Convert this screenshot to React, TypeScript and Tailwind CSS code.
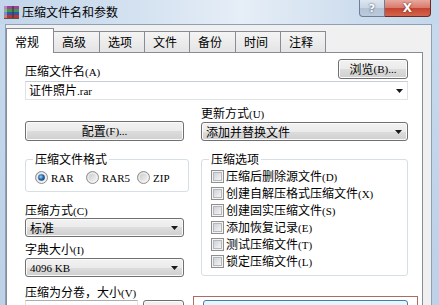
import React from "react";

function T({ s }: { s: string }) {
  const parts = s.split(/([\x00-\x7F]+)/).filter(Boolean);
  return (
    <>
      {parts.map((p, i) =>
        /^[\x00-\x7F]+$/.test(p) ? (
          <span key={i} className="font-['Liberation_Serif',serif] text-[11px]">
            {p}
          </span>
        ) : (
          <span key={i}>{p}</span>
        )
      )}
    </>
  );
}

function Arrow() {
  return (
    <svg width="7" height="4" viewBox="0 0 7 4" className="shrink-0">
      <path d="M0 0H7L3.5 4Z" fill="#1a1a1a" />
    </svg>
  );
}

function Radio({ checked }: { checked?: boolean }) {
  return (
    <svg width="13" height="13" viewBox="0 0 13 13" className="shrink-0">
      <defs>
        <linearGradient id="rgbg" x1="0" y1="0" x2="1" y2="1">
          <stop offset="0" stopColor="#c4c4c4" />
          <stop offset="1" stopColor="#fbfbfb" />
        </linearGradient>
        <radialGradient id="rgdot" cx="0.4" cy="0.4" r="0.6">
          <stop offset="0" stopColor="#9fdcfb" />
          <stop offset="0.55" stopColor="#2f72bd" />
          <stop offset="1" stopColor="#163f74" />
        </radialGradient>
      </defs>
      <circle cx="6.5" cy="6.5" r="6" fill="url(#rgbg)" stroke="#8e8f8f" />
      <circle cx="6.5" cy="6.5" r="4.5" fill="none" stroke="#f4f4f4" strokeWidth="1" />
      {checked && <circle cx="6.5" cy="6.5" r="3.3" fill="url(#rgdot)" />}
    </svg>
  );
}

function Check() {
  return (
    <svg width="13" height="13" viewBox="0 0 13 13" className="shrink-0">
      <defs>
        <linearGradient id="cbbg" x1="0" y1="0" x2="1" y2="1">
          <stop offset="0" stopColor="#cbcfd5" />
          <stop offset="1" stopColor="#f7f7f7" />
        </linearGradient>
      </defs>
      <rect x="0.5" y="0.5" width="12" height="12" fill="#f4f4f4" stroke="#8e8f8f" />
      <rect x="2.5" y="2.5" width="8" height="8" fill="url(#cbbg)" stroke="#b4b7bb" />
    </svg>
  );
}

const btn =
  "border border-[#707070] rounded-[3px] bg-[linear-gradient(#f2f2f2_0%,#ebebeb_50%,#dddddd_50%,#cfcfcf_100%)] shadow-[inset_0_0_0_1px_#fbfbfb]";

function Combo({ text, className = "" }: { text: string; className?: string }) {
  return (
    <div className={`${btn} h-[19px] flex items-center justify-between pl-[4px] pr-[5px] ${className}`}>
      <span>
        <T s={text} />
      </span>
      <Arrow />
    </div>
  );
}

function WinRarIcon() {
  return (
    <svg width="17" height="16" viewBox="0 0 17 16">
      <rect x="1" y="2" width="15" height="3" fill="#a33f9c" />
      <rect x="1" y="5" width="15" height="3" fill="#3f9a49" />
      <rect x="1" y="8" width="15" height="3" fill="#2f56b0" />
      <rect x="1" y="11" width="15" height="3" fill="#b8372e" />
      <rect x="1" y="2" width="3" height="12" fill="#ffffff" opacity="0.35" />
      <rect x="9" y="2" width="2" height="12" fill="#3a3a3a" opacity="0.6" />
      <rect x="1" y="14" width="15" height="1" fill="#555" />
    </svg>
  );
}

function TitleBar() {
  return (
    <div className="flex h-[24px] bg-[linear-gradient(90deg,#c2d5ea_0%,#d6e3f1_35%,#e6eef7_55%,#cfdeee_80%,#c4d7eb_100%)]">
      <div className="flex flex-1 items-center gap-[2px] pl-[3px]">
        <WinRarIcon />
        <span className="text-[12px] text-black">压缩文件名和参数</span>
      </div>
      <div className="flex items-start pr-[8px]">
        <div className="w-[26px] h-[17px] border border-[#6d7f98] border-t-0 rounded-bl-[4px] bg-[linear-gradient(#dde6f0_0%,#c9d5e3_50%,#b3c2d4_51%,#bccbdc_100%)] flex items-center justify-center">
          <span className="font-['DejaVu_Sans',sans-serif] font-bold text-[11px] leading-none text-white [text-shadow:0_0_2px_#203040]">
            ?
          </span>
        </div>
        <div className="w-[46px] h-[17px] border border-[#6a2b22] border-t-0 border-l-0 rounded-br-[4px] bg-[linear-gradient(#e7a99e_0%,#d9786a_50%,#c5432f_51%,#d2654d_100%)] flex items-center justify-center">
          <span className="font-['DejaVu_Sans',sans-serif] font-bold text-[12px] leading-none text-white [text-shadow:0_0_2px_#5a1a10]">
            X
          </span>
        </div>
      </div>
    </div>
  );
}

function Tabs() {
  const others: [string, number][] = [
    ["高级", 47],
    ["选项", 46],
    ["文件", 46],
    ["备份", 47],
    ["时间", 46],
    ["注释", 46],
  ];
  return (
    <div className="relative z-10 -mb-px flex h-[25px] items-end">
      <div className="relative z-10 w-[48px] h-[25px] bg-white border border-b-0 border-[#898c95] pl-[8px] pt-[6px]">
        常规
      </div>
      {others.map(([t, w]) => (
        <div
          key={t}
          style={{ width: w }}
          className="-ml-px mb-px h-[21px] border border-b-0 border-[#898c95] bg-[linear-gradient(#f4f4f4,#e4e4e4)] flex items-center pl-[8px]"
        >
          {t}
        </div>
      ))}
    </div>
  );
}

function Panel() {
  const checks = [
    "压缩后删除源文件(D)",
    "创建自解压格式压缩文件(X)",
    "创建固实压缩文件(S)",
    "添加恢复记录(E)",
    "测试压缩文件(T)",
    "锁定压缩文件(L)",
  ];
  return (
    <div className="w-[417px] flex-1 bg-white border border-[#898c95] pl-[18px] pr-[14px] pt-[6px]">
      <div className="flex h-[20px] items-end justify-between">
        <span>
          <T s="压缩文件名(A)" />
        </span>
        <div className={`${btn} w-[70px] h-[20px] flex items-center justify-center`}>
          <T s="浏览(B)..." />
        </div>
      </div>
      <div className="mt-[2px] h-[19px] border border-[#dfe3e8] border-t-[#c9ced6] bg-white flex items-center justify-between pl-[3px] pr-[4px]">
        <span>
          <T s="证件照片.rar" />
        </span>
        <Arrow />
      </div>

      <div className="flex gap-[17px]">
        {/* left column */}
        <div className="w-[159px] flex flex-col">
          <div className={`${btn} mt-[21px] h-[20px] flex items-center justify-center`}>
            <T s="配置(F)..." />
          </div>
          <fieldset className="mt-[11px] border border-[#d5dfe5] rounded-[3px]">
            <legend className="ml-[7px] px-[2px] leading-[14px]">压缩文件格式</legend>
            <div className="flex pl-[9px] pt-[4px] pb-[7px]">
              {[
                ["RAR", true],
                ["RAR5", false],
                ["ZIP", false],
              ].map(([l, c]) => (
                <div key={l as string} className="w-[51px] h-[14px] flex items-center gap-[3px]">
                  <Radio checked={c as boolean} />
                  <span>
                    <T s={l as string} />
                  </span>
                </div>
              ))}
            </div>
          </fieldset>
          <div className="mt-[11px] h-[14px]">
            <T s="压缩方式(C)" />
          </div>
          <Combo text="标准" className="mt-[1px]" />
          <div className="mt-[5px] h-[14px]">
            <T s="字典大小(I)" />
          </div>
          <Combo text="4096 KB" className="mt-[2px]" />
          <div className="mt-[8px] h-[14px]">
            <T s="压缩为分卷，大小(V)" />
          </div>
          <div className="mt-[1px] flex gap-[5px]">
            <div className="w-[113px] h-[21px] border border-[#dfe3e8] border-t-[#abadb3] bg-white" />
            <div className={`${btn} w-[41px] h-[21px]`} />
          </div>
        </div>

        {/* right column */}
        <div className="w-[207px] flex flex-col">
          <div className="mt-[6px] h-[14px]">
            <T s="更新方式(U)" />
          </div>
          <Combo text="添加并替换文件" className="mt-[2px]" />
          <fieldset className="mt-[11px] border border-[#d5dfe5] rounded-[3px]">
            <legend className="ml-[7px] px-[2px] leading-[14px]">压缩选项</legend>
            <div className="flex flex-col pl-[9px] pt-[2px] pb-[5px]">
              {checks.map((c) => (
                <div key={c} className="h-[17px] flex items-center gap-[2px]">
                  <Check />
                  <span>
                    <T s={c} />
                  </span>
                </div>
              ))}
            </div>
          </fieldset>
          <div className="mt-[20px] -ml-[8px] -mr-[10px] border border-[#b06a66] px-[9px] pt-[3px] pb-[4px]">
            <div className="h-[22px] border border-[#3c7fb1] rounded-[3px] bg-[linear-gradient(#eaf6fd_0%,#d9f0fc_50%,#bee6fd_51%,#a7d9f5_100%)] flex items-center justify-center">
              <T s="设置密码(P)..." />
            </div>
          </div>
        </div>
      </div>
    </div>
  );
}

export default function App() {
  return (
    <div className="w-[439px] h-[305px] overflow-hidden bg-[#c4d7eb] font-['Noto_Sans_CJK_SC',sans-serif] text-[12px] leading-[14px] text-black">
      <TitleBar />
      <div className="flex h-[281px]">
        <div className="w-[5px] bg-[linear-gradient(#c6d9ed,#bdd1e7)]" />
        <div className="w-[427px] flex flex-col border-l border-r border-t border-[#8ea0b6] bg-[#f0f0f0] pt-[3px]">
          <Tabs />
          <Panel />
        </div>
        <div className="w-[7px] bg-[linear-gradient(#c6d9ed,#bdd1e7)]" />
      </div>
    </div>
  );
}
